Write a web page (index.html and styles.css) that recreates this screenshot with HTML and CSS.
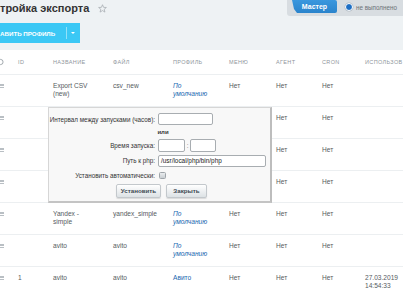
FILE: index.html
```html
<!DOCTYPE html>
<html lang="ru">
<head>
<meta charset="utf-8">
<title>Настройка экспорта</title>
<link rel="stylesheet" href="styles.css">
</head>
<body>
<div class="page">
  <div class="top">
    <div class="top-row">
      <h1 class="title">тройка экспорта</h1>
      <svg class="star" width="9" height="9" viewBox="0 0 10 10"><path d="M5 0.8 L6.2 3.7 L9.3 3.9 L6.9 5.9 L7.7 9 L5 7.3 L2.3 9 L3.1 5.9 L0.7 3.9 L3.8 3.7 Z" fill="none" stroke="#a3a9ae" stroke-width="0.8" stroke-linejoin="round"/></svg>
      <div class="master-panel">
        <div class="master-btn">Мастер</div>
        <span class="radio"></span>
        <span class="status">не выполнено</span>
      </div>
    </div>
    <div class="add-btn">
      <span class="add-text">АВИТЬ ПРОФИЛЬ</span>
      <span class="add-sep"></span>
      <span class="add-arrow"><span class="tri"></span></span>
    </div>
  </div>

  <div class="grid">
    <div class="row head">
      <div><svg class="gear" width="5" height="8" viewBox="0 0 5 8"><circle cx="0.5" cy="4" r="2.6" fill="none" stroke="#9aa1a7" stroke-width="0.9"/></svg></div>
      <div>ID</div><div>НАЗВАНИЕ</div><div>ФАЙЛ</div><div>ПРОФИЛЬ</div><div>МЕНЮ</div><div>АГЕНТ</div><div>CRON</div><div>ИСПОЛЬЗОВ</div>
    </div>
    <div class="row">
      <div><span class="drag"></span></div><div></div><div>Export CSV<br>(new)</div><div>csv_new</div><div class="link it">По<br>умолчанию</div><div>Нет</div><div>Нет</div><div>Нет</div><div></div>
    </div>
    <div class="row">
      <div><span class="drag"></span></div><div></div><div></div><div></div><div></div><div>Нет</div><div>Нет</div><div>Нет</div><div></div>
    </div>
    <div class="row">
      <div><span class="drag"></span></div><div></div><div></div><div></div><div></div><div>Нет</div><div>Нет</div><div>Нет</div><div></div>
    </div>
    <div class="row">
      <div><span class="drag"></span></div><div></div><div></div><div></div><div></div><div>Нет</div><div>Нет</div><div>Нет</div><div></div>
    </div>
    <div class="row">
      <div><span class="drag"></span></div><div></div><div>Yandex -<br>simple</div><div>yandex_simple</div><div class="link it">По<br>умолчанию</div><div>Нет</div><div>Нет</div><div>Нет</div><div></div>
    </div>
    <div class="row">
      <div><span class="drag"></span></div><div></div><div>avito</div><div>avito</div><div class="link it">По<br>умолчанию</div><div>Нет</div><div>Нет</div><div>Нет</div><div></div>
    </div>
    <div class="row">
      <div><span class="drag"></span></div><div>1</div><div>avito</div><div>avito</div><div class="link">Авито</div><div>Нет</div><div>Нет</div><div>Нет</div><div>27.03.2019<br>14:54:33</div>
    </div>
  </div>

  <div class="dialog">
    <div class="form">
      <label class="lbl">Интервал между запусками (часов):</label>
      <div class="ctl"><span class="inp w55"></span></div>
      <div class="or">или</div>
      <label class="lbl">Время запуска:</label>
      <div class="ctl"><span class="inp w27 h13"></span><span class="colon">:</span><span class="inp w26 h13"></span></div>
      <label class="lbl">Путь к php:</label>
      <div class="ctl"><span class="inp w108">/usr/local/php/bin/php</span></div>
      <label class="lbl">Установить автоматически:</label>
      <div class="ctl"><span class="check"></span></div>
      <div class="buttons">
        <span class="btn b1">Установить</span>
        <span class="btn b2">Закрыть</span>
      </div>
    </div>
  </div>
</div>
</body>
</html>
```

FILE: styles.css
```css
html, body {
  margin: 0;
  padding: 0;
}
body {
  width: 403px;
  height: 294px;
  overflow: hidden;
  background: #ffffff;
  font-family: "Liberation Sans", Arial, sans-serif;
}
.page {
  position: relative;
  width: 403px;
  height: 294px;
  overflow: hidden;
}
.top {
  background: #eef2f4;
  height: 50px;
  display: flex;
  flex-direction: column;
}
.top-row {
  display: flex;
  align-items: flex-start;
  height: 16px;
}
.title {
  margin: 0;
  font-size: 11px;
  line-height: 16px;
  font-weight: bold;
  color: #333;
  white-space: nowrap;
}
.star {
  margin: 4px 0 0 9px;
}
.master-panel {
  margin-left: auto;
  width: 116px;
  height: 16px;
  background: #d8dde1;
  border-bottom-left-radius: 3px;
  display: flex;
  align-items: center;
  box-sizing: border-box;
  padding-bottom: 2px;
}
.master-btn {
  margin-left: 5px;
  width: 45px;
  height: 13px;
  background: linear-gradient(#3a97de, #2a84cc);
  clip-path: polygon(0 0, 100% 0, 100% 100%, 5px 100%, 2px 70%);
  border-radius: 0 2px 2px 0;
  color: #fff;
  font-size: 7px;
  font-weight: bold;
  line-height: 13px;
  text-align: center;
  align-self: flex-start;
}
.radio {
  margin-left: 8px;
  width: 6px;
  height: 6px;
  border-radius: 50%;
  background: #1d6fc4;
  border: 1.5px solid #fff;
  box-shadow: 0 0 0 0.5px #b5bcc2;
}
.status {
  margin-left: 3px;
  font-size: 6.3px;
  color: #6b7278;
  white-space: nowrap;
}
.add-btn {
  margin-top: 7px;
  width: 80px;
  height: 20px;
  background: #3bc8f5;
  display: flex;
  align-items: center;
  color: #fff;
}
.add-text {
  width: 66px;
  font-size: 6.2px;
  font-weight: bold;
  white-space: nowrap;
}
.add-sep {
  width: 1px;
  height: 12px;
  background: rgba(255, 255, 255, 0.45);
}
.add-arrow {
  flex: 1;
  display: flex;
  justify-content: center;
  padding-right: 2px;
}
.tri {
  width: 0;
  height: 0;
  border-left: 2px solid transparent;
  border-right: 2px solid transparent;
  border-top: 2px solid #fff;
}

.grid {
  font-size: 6.6px;
  line-height: 8px;
  color: #555b61;
}
.row {
  display: grid;
  grid-template-columns: 18px 35px 60px 60px 56px 47px 46px 43px 38px;
  height: 32px;
  box-sizing: border-box;
  border-top: 1px solid #eceff1;
  padding-top: 7px;
  white-space: nowrap;
}
.row.head {
  height: 24px;
  border-top: 0;
  padding-top: 0;
  align-items: center;
  font-size: 5.5px;
  letter-spacing: 0.35px;
  color: #8f969c;
}
.gear {
  display: block;
}
.drag {
  display: block;
  width: 4px;
  height: 4px;
  margin-top: 2px;
  background: linear-gradient(#b9bfc4 0 1px, transparent 1px 1.5px, #b9bfc4 1.5px 2.5px, transparent 2.5px 3px, #b9bfc4 3px 4px);
}
.link {
  color: #2067b0;
}
.it {
  font-style: italic;
}

.dialog {
  position: absolute;
  left: 48px;
  top: 107px;
  width: 224px;
  height: 96px;
  box-sizing: border-box;
  background: #f8f8f8;
  border: 1px solid #d6d6d6;
  border-right: 2px solid #bdbdbd;
  border-bottom: 2px solid #c4c4c4;
}
.form {
  display: grid;
  grid-template-columns: 106px 113px;
  column-gap: 3px;
  grid-template-rows: 12px 14px 13px 17px 13px 16px;
  padding-top: 5px;
  font-size: 6.3px;
  color: #333;
}
.lbl {
  text-align: right;
  white-space: nowrap;
  display: flex;
  align-items: center;
  justify-content: flex-end;
}
.ctl {
  display: flex;
  align-items: center;
}
.or {
  grid-column: 1 / 3;
  text-align: center;
  font-weight: bold;
  font-size: 6px;
  line-height: 14px;
  padding-left: 6px;
}
.inp {
  display: inline-block;
  box-sizing: border-box;
  height: 12px;
  background: #fff;
  border: 1px solid #a8adb1;
  border-radius: 2px;
  font-size: 6.4px;
  line-height: 10px;
  padding-left: 2px;
  color: #222;
  white-space: nowrap;
}
.h13 { height: 13px; }
.w55 { width: 55px; }
.w27 { width: 27px; }
.w26 { width: 26px; }
.w108 { width: 108px; }
.colon {
  width: 5px;
  text-align: center;
  color: #777;
}
.check {
  margin-left: 1px;
  width: 7px;
  height: 7px;
  box-sizing: border-box;
  border: 1px solid #9ea4a9;
  border-radius: 1.5px;
  background: linear-gradient(#e9ecee, #c9ced2);
}
.buttons {
  grid-column: 1 / 3;
  display: flex;
  justify-content: center;
  align-items: flex-end;
  gap: 5px;
  padding-left: 3px;
}
.btn {
  height: 14px;
  box-sizing: border-box;
  border-radius: 2px;
  border: 1px solid #c3c8cc;
  background: linear-gradient(#ffffff, #dde2e5);
  box-shadow: 0 1px 1px rgba(0,0,0,0.12);
  font-size: 6.2px;
  font-weight: bold;
  color: #3d4a52;
  line-height: 12px;
  text-align: center;
}
.b1 { width: 45px; }
.b2 { width: 41px; }
```
